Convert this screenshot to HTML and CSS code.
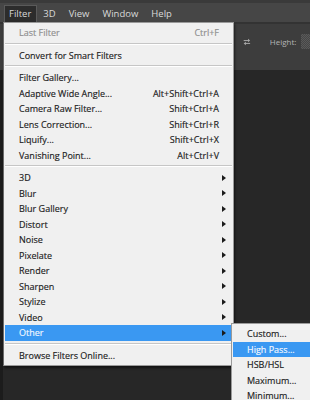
FILE: index.html
```html
<!DOCTYPE html>
<html>
<head>
<meta charset="utf-8">
<link rel="stylesheet" href="styles.css">
</head>
<body>
<div class="app">
  <div class="menubar">
    <span class="mb-item active">Filter</span>
    <span class="mb-item">3D</span>
    <span class="mb-item">View</span>
    <span class="mb-item">Window</span>
    <span class="mb-item">Help</span>
  </div>
  <div class="optbar">
    <svg class="swap" width="11" height="10" viewBox="0 0 11 10">
      <path d="M1 3h7" stroke="#a8a8a8" stroke-width="1.4"/>
      <path d="M7 0.5l3 2.5-3 2.5z" fill="#a8a8a8"/>
      <path d="M10 7H3" stroke="#a8a8a8" stroke-width="1.4"/>
      <path d="M4 4.5l-3 2.5 3 2.5z" fill="#a8a8a8"/>
    </svg>
    <span class="opt-label">Height:</span>
    <span class="opt-field"></span>
  </div>
  <div class="workspace"></div>

  <div class="menu">
    <div class="item disabled"><span>Last Filter</span><span class="sc">Ctrl+F</span><span></span></div>
    <div class="sep"></div>
    <div class="item"><span>Convert for Smart Filters</span><span class="sc"></span><span></span></div>
    <div class="sep"></div>
    <div class="item"><span>Filter Gallery...</span><span class="sc"></span><span></span></div>
    <div class="item"><span>Adaptive Wide Angle...</span><span class="sc">Alt+Shift+Ctrl+A</span><span></span></div>
    <div class="item"><span>Camera Raw Filter...</span><span class="sc">Shift+Ctrl+A</span><span></span></div>
    <div class="item"><span>Lens Correction...</span><span class="sc">Shift+Ctrl+R</span><span></span></div>
    <div class="item"><span>Liquify...</span><span class="sc">Shift+Ctrl+X</span><span></span></div>
    <div class="item"><span>Vanishing Point...</span><span class="sc">Alt+Ctrl+V</span><span></span></div>
    <div class="sep"></div>
    <div class="item"><span>3D</span><span class="sc"></span><span class="arrow"></span></div>
    <div class="item"><span>Blur</span><span class="sc"></span><span class="arrow"></span></div>
    <div class="item"><span>Blur Gallery</span><span class="sc"></span><span class="arrow"></span></div>
    <div class="item"><span>Distort</span><span class="sc"></span><span class="arrow"></span></div>
    <div class="item"><span>Noise</span><span class="sc"></span><span class="arrow"></span></div>
    <div class="item"><span>Pixelate</span><span class="sc"></span><span class="arrow"></span></div>
    <div class="item"><span>Render</span><span class="sc"></span><span class="arrow"></span></div>
    <div class="item"><span>Sharpen</span><span class="sc"></span><span class="arrow"></span></div>
    <div class="item"><span>Stylize</span><span class="sc"></span><span class="arrow"></span></div>
    <div class="item"><span>Video</span><span class="sc"></span><span class="arrow"></span></div>
    <div class="item hl"><span>Other</span><span class="sc"></span><span class="arrow"></span></div>
    <div class="sep"></div>
    <div class="item"><span>Browse Filters Online...</span><span class="sc"></span><span></span></div>
  </div>

  <div class="submenu">
    <div class="item"><span>Custom...</span></div>
    <div class="item hl"><span>High Pass...</span></div>
    <div class="item"><span>HSB/HSL</span></div>
    <div class="item"><span>Maximum...</span></div>
    <div class="item"><span>Minimum...</span></div>
  </div>
</div>
</body>
</html>
```

FILE: styles.css
```css
* { box-sizing: border-box; }
html, body { margin: 0; padding: 0; }
body {
  width: 310px;
  height: 400px;
  overflow: hidden;
  background: #272727;
  font-family: "Open Sans", "Noto Sans", sans-serif;
}
.app {
  position: relative;
  width: 310px;
  height: 400px;
  display: flex;
  flex-direction: column;
}
.menubar {
  height: 22px;
  background: #464646;
  border-top: 3px solid #3a3a3a;
  display: flex;
  align-items: flex-end;
  padding-left: 4px;
  flex: none;
}
.mb-item {
  color: #d9d9d9;
  font-size: 9.5px;
  height: 17px;
  line-height: 16px;
  padding: 0 7px 0 4px;
  border: 1px solid transparent;
  border-bottom: none;
}
.mb-item.active {
  background: #2c2c2c;
  border-color: #5a5a5a;
  padding: 0 5px 0 4px;
  margin-right: 1px;
}
.optbar {
  height: 48px;
  flex: none;
  background: #3d3d3d;
  border-top: 2px solid #333;
  display: flex;
  align-items: flex-start;
  padding: 10px 0 0 243px;
}
.swap { margin-top: 3px; }
.opt-label {
  margin-left: 19px;
  margin-top: 2px;
  color: #b4b4b4;
  font-size: 8px;
  line-height: 12px;
}
.opt-field {
  margin-left: 5px;
  width: 12px;
  height: 15px;
  background: repeating-conic-gradient(#5a5a5a 0 25%, #464646 0 50%) 0 0 / 2px 2px;
}
.workspace {
  flex: 1;
  background: #272727;
  border-left: 3px solid #1c1c1c;
}
.menu {
  position: absolute;
  left: 3px;
  top: 22px;
  width: 231px;
  padding: 2px 1px 2px 1px;
  background: #f0f0f0;
  border: 1px solid #9a9a9a;
  border-left-color: #6b6b6b;
  box-shadow: 1px 2px 2px rgba(0,0,0,0.5);
  font-size: 9px;
  color: #1b1b1b;
}
.item {
  display: grid;
  grid-template-columns: 1fr auto 13px;
  height: 15.5px;
  line-height: 15.5px;
  padding-left: 14px;
  white-space: nowrap;
  -webkit-text-stroke: 0.15px currentColor;
}
.item.disabled { color: #8e8e8e; }
.item.hl {
  background: #3a98f2;
  color: #f2f7ff;
}
.sc { text-align: right; }
.arrow {
  justify-self: start;
  align-self: center;
  margin-left: 3px;
  width: 0;
  height: 0;
  border-top: 3px solid transparent;
  border-bottom: 3px solid transparent;
  border-left: 4px solid #1b1b1b;
}
.sep {
  height: 2px;
  margin: 2px 0 3px 0;
  border-top: 1px solid #c6c6c6;
  border-bottom: 1px solid #ffffff;
}
.submenu {
  position: absolute;
  left: 231px;
  top: 323px;
  width: 85px;
  padding: 2px 1px;
  background: #f0f0f0;
  border: 1px solid #9a9a9a;
  font-size: 9px;
  color: #1b1b1b;
}
.submenu .item {
  grid-template-columns: 1fr;
}
```
